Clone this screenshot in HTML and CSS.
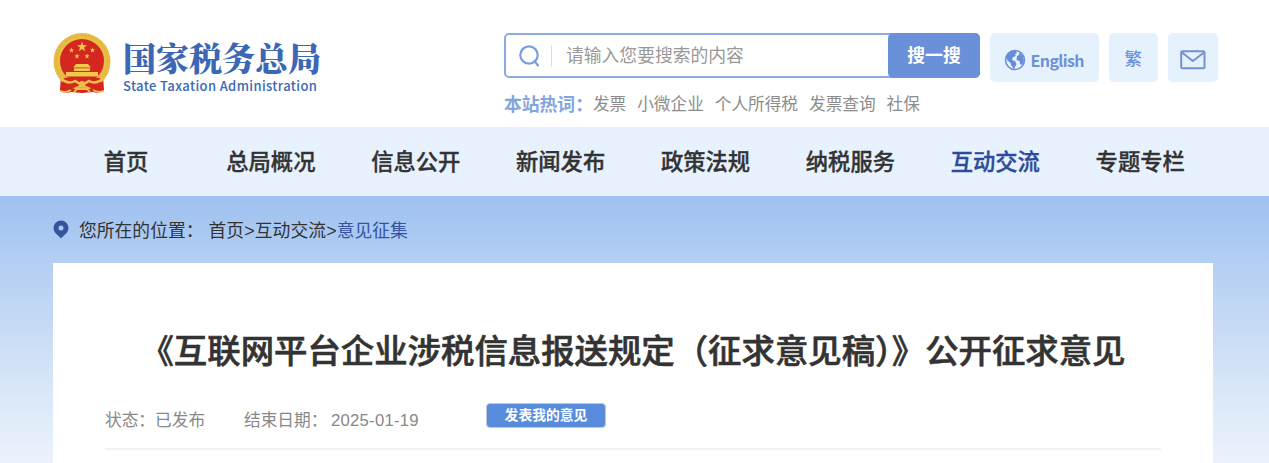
FILE: index.html
```html
<!DOCTYPE html>
<html lang="zh-CN">
<head>
<meta charset="utf-8">
<title>国家税务总局</title>
<link rel="stylesheet" href="styles.css">
</head>
<body>
<header class="header">
  <a class="logo">
    <svg class="emblem" viewBox="0 0 58 62">
      <path d="M8 42 L7 57 Q12 61 18 59 L29 60 L40 59 Q46 61 51 57 L50 42Z" fill="#d3271f"/>
      <circle cx="29" cy="28.500" r="28.500" fill="#e8bd45"/>
      <circle cx="29" cy="28.500" r="26" fill="none" stroke="#dda836" stroke-width="1" stroke-dasharray="2 2"/>
      <circle cx="29" cy="28" r="22" fill="#d3271f"/>
      <path d="M29 8.500l1.250 3.700h3.900l-3.150 2.350 1.200 3.750-3.200-2.300-3.200 2.300 1.200-3.750-3.150-2.350h3.900z" fill="#f2c94c"/>
      <g fill="#f2c94c">
        <path d="M18.500 14.500l.7 1.800 1.900.1-1.500 1.200.5 1.900-1.600-1.100-1.600 1.100.5-1.900-1.500-1.200 1.900-.1z"/>
        <path d="M39.500 14.500l.7 1.800 1.900.1-1.500 1.200.5 1.900-1.600-1.100-1.600 1.100.5-1.900-1.500-1.200 1.900-.1z"/>
        <path d="M24 20.500l.7 1.800 1.900.1-1.500 1.200.5 1.900-1.600-1.100-1.600 1.100.5-1.900-1.500-1.200 1.900-.1z"/>
        <path d="M34 20.500l.7 1.800 1.900.1-1.500 1.200.5 1.900-1.600-1.100-1.600 1.100.5-1.900-1.500-1.200 1.900-.1z"/>
        <path d="M23 31h12l3 3.500H20zM21 35.300h16v2.700H21zM13 39h32v4.500H13z"/>
      </g>
      <path d="M11 45q8-1 14 3l4-2 4 2q6-4 14-3l4 12q-7-3-11-1l-11-5-11 5q-4-2-11 1z" fill="#d3271f"/>
      <path d="M7 45q8 7 15 3l7 4 7-4q7 4 15-3" fill="none" stroke="#ecc04b" stroke-width="2.500"/>
      <path d="M7 58q6 2 11-1M51 58q-6 2-11-1M21 59l3-3h10l3 3" fill="none" stroke="#ecc04b" stroke-width="1.800"/>
      <circle cx="29" cy="51" r="3" fill="#ecc04b"/>
    </svg>
    <span class="logo-text">
      <span class="logo-cn">国家税务总局</span>
      <span class="logo-en">State Taxation Administration</span>
    </span>
  </a>
  <div class="search">
    <div class="search-box">
      <svg class="search-icon" viewBox="0 0 22 22"><circle cx="10" cy="10" r="8.700"/><path d="M15.500 16l3.500 4.500"/></svg>
      <span class="search-placeholder">请输入您要搜索的内容</span>
      <span class="search-button">搜一搜</span>
    </div>
    <div class="hot"><b class="hot-label">本站热词：</b><a>发票</a><a>小微企业</a><a>个人所得税</a><a>发票查询</a><a>社保</a></div>
  </div>
  <div class="tools">
    <a class="tool tool-english">
      <svg class="globe" viewBox="0 0 22 22"><circle cx="11" cy="11" r="9.500" fill="#e6f1fe" stroke="#668dd6" stroke-width="1.500"/><path d="M2 8Q4 2 11 1.500l2 2-2 2 1 1.500-3 1-1 3 3 1 1.500 3-2.500 5Q7 17 6.500 14L3 11zM15 3l4 4 1 5-2 4-2-1-.5-3-3-1 .5-4 2-1z" fill="#668dd6"/></svg>
      <span class="tool-label">English</span>
    </a>
    <a class="tool tool-trad">繁</a>
    <a class="tool tool-mail"><svg class="mail" viewBox="0 0 26 20"><rect x="1.200" y="1.200" width="23.300" height="17" rx="1.500"/><path d="M2 2.500l10.850 8.500L24 2.500"/></svg></a>
  </div>
</header>
<nav class="nav">
  <div class="nav-list"><a>首页</a><a>总局概况</a><a>信息公开</a><a>新闻发布</a><a>政策法规</a><a>纳税服务</a><a class="active">互动交流</a><a>专题专栏</a></div>
</nav>
<main class="main">
  <div class="crumbs">
    <svg class="pin" viewBox="0 0 16 19"><path fill-rule="evenodd" d="M8 .5a7.500 7.500 0 0 0-7.500 7.500c0 4.500 4.500 7 7.500 10.500 3-3.500 7.500-6 7.500-10.500A7.500 7.500 0 0 0 8 .5zM8 5.500a2.500 2.500 0 1 1 0 5 2.500 2.500 0 0 1 0-5z"/></svg>
    <span class="crumb-label">您所在的位置：</span><span class="crumb-path">首页&gt;互动交流&gt;</span><span class="crumb-current">意见征集</span>
  </div>
  <article class="card">
    <h1 class="title">《互联网平台企业涉税信息报送规定（征求意见稿）》公开征求意见</h1>
    <div class="meta">
      <span class="status">状态：已发布</span>
      <span class="deadline">结束日期：</span><span class="date">2025-01-19</span>
      <a class="opinion">发表我的意见</a>
    </div>
  </article>
</main>
</body>
</html>
```
FILE: styles.css
```css
* { box-sizing: border-box; }
body {
  margin: 0;
  height: 463px;
  overflow: hidden;
  background: #fff;
  color: #333;
  font-family: "Liberation Sans", "Noto Sans CJK SC", sans-serif;
}
.header {
  display: flex;
  align-items: flex-start;
  height: 127px;
  padding: 33px 51px 0 53px;
}
.logo { display: flex; width: 451px; }
.emblem { width: 58px; height: 62px; flex: none; }
.logo-text { display: flex; flex-direction: column; padding: 6px 0 0 12px; color: #3b67b5; }
.logo-cn {
  font: 900 33px/36px "Noto Serif CJK SC", "Noto Serif SC", "Noto Sans CJK SC", serif;
  white-space: nowrap;
}
.logo-en {
  margin-top: 3px;
  font: 500 13px/16px "Noto Sans CJK SC", sans-serif;
  letter-spacing: .37px;
  white-space: nowrap;
}
.search { width: 476px; }
.search-box {
  display: flex;
  align-items: center;
  height: 45px;
  border: 2px solid #8eabdf;
  border-radius: 5px;
}
.search-icon {
  width: 22px;
  height: 22px;
  margin-left: 13px;
  fill: none;
  stroke: #7ba0dc;
  stroke-width: 2.200;
  stroke-linecap: round;
}
.search-placeholder {
  flex: 1;
  margin-left: 10px;
  padding-left: 14px;
  border-left: 1px solid #ddd;
  color: #999;
  font-size: 17.800px;
  line-height: 22px;
}
.search-button {
  width: 92px;
  height: 45px;
  margin: -2px;
  border-radius: 5px;
  background: #6a90d9;
  color: #fff;
  font-weight: 700;
  font-size: 17.800px;
  line-height: 47px;
  text-align: center;
}
.hot {
  display: flex;
  gap: 11px;
  padding-top: 15px;
  color: #8c8c8c;
  font-size: 16.650px;
  line-height: 24px;
  white-space: nowrap;
}
.hot-label { margin-right: -11px; color: #82a5dd; font-size: 17.800px; }
.tools { display: flex; gap: 10px; margin-left: 10px; }
.tool {
  display: flex;
  align-items: center;
  justify-content: center;
  width: 49.500px;
  height: 49px;
  border-radius: 5px;
  background: #e6f1fe;
  color: #6d91d8;
}
.tool-english { width: 108.500px; padding-top: 5px; gap: 4px; }
.tool-label { font: 700 16px/22px "Noto Sans CJK SC", sans-serif; letter-spacing: -.6px; }
.globe { width: 22px; height: 22px; }
.tool-trad { font-size: 17.500px; font-weight: 500; }
.mail { width: 26px; height: 20px; margin-top: 5px; fill: none; stroke: #7391cf; stroke-width: 2; stroke-linejoin: round; }
.nav { height: 69px; background: #e8f2fe; }
.nav-list {
  display: grid;
  grid-template-columns: repeat(8, 144.900px);
  margin-left: 53.500px;
  font-size: 22.300px;
  font-weight: 500;
  line-height: 71px;
  height: 69px;
  text-align: center;
  -webkit-text-stroke: .35px currentColor;
}
.active { color: #2c4b9b; }
.main {
  height: 267px;
  padding: 0 56px 0 53px;
  background: linear-gradient(#9fc1f0 0%, #b3cff3 25%, #d0e0f7 60%, #dceaf8 78%, #ebf2fd 100%);
}
.crumbs { display: flex; align-items: center; height: 67px; padding-bottom: 2px; font-size: 17.800px; }
.pin { width: 16px; height: 19px; margin: 2px 10px 0 0; fill: #3554a0; }
.crumb-label { margin-right: 5px; }
.crumb-path { letter-spacing: .1px; }
.crumb-current { color: #3553a0; }
.card { height: 200px; padding: 64px 52px 0; background: #fff; }
.title {
  margin: 0 -10px;
  font-size: 33.400px;
  font-weight: 500;
  line-height: 50px;
  text-align: center;
  white-space: nowrap;
  -webkit-text-stroke: .6px currentColor;
}
.meta {
  display: flex;
  height: 73px;
  padding-top: 26px;
  border-bottom: 2px solid #f2f2f2;
  color: #888;
  font-size: 16.700px;
  line-height: 36px;
}
.status { width: 139px; }
.deadline { width: 87px; }
.date { width: 155px; letter-spacing: .25px; }
.opinion {
  width: 120px;
  height: 25px;
  border: 1px solid #c0c8d6;
  border-radius: 4px;
  background: #578cdd;
  color: #fff;
  font-size: 13.800px;
  font-weight: 700;
  line-height: 23px;
  text-align: center;
}
```
